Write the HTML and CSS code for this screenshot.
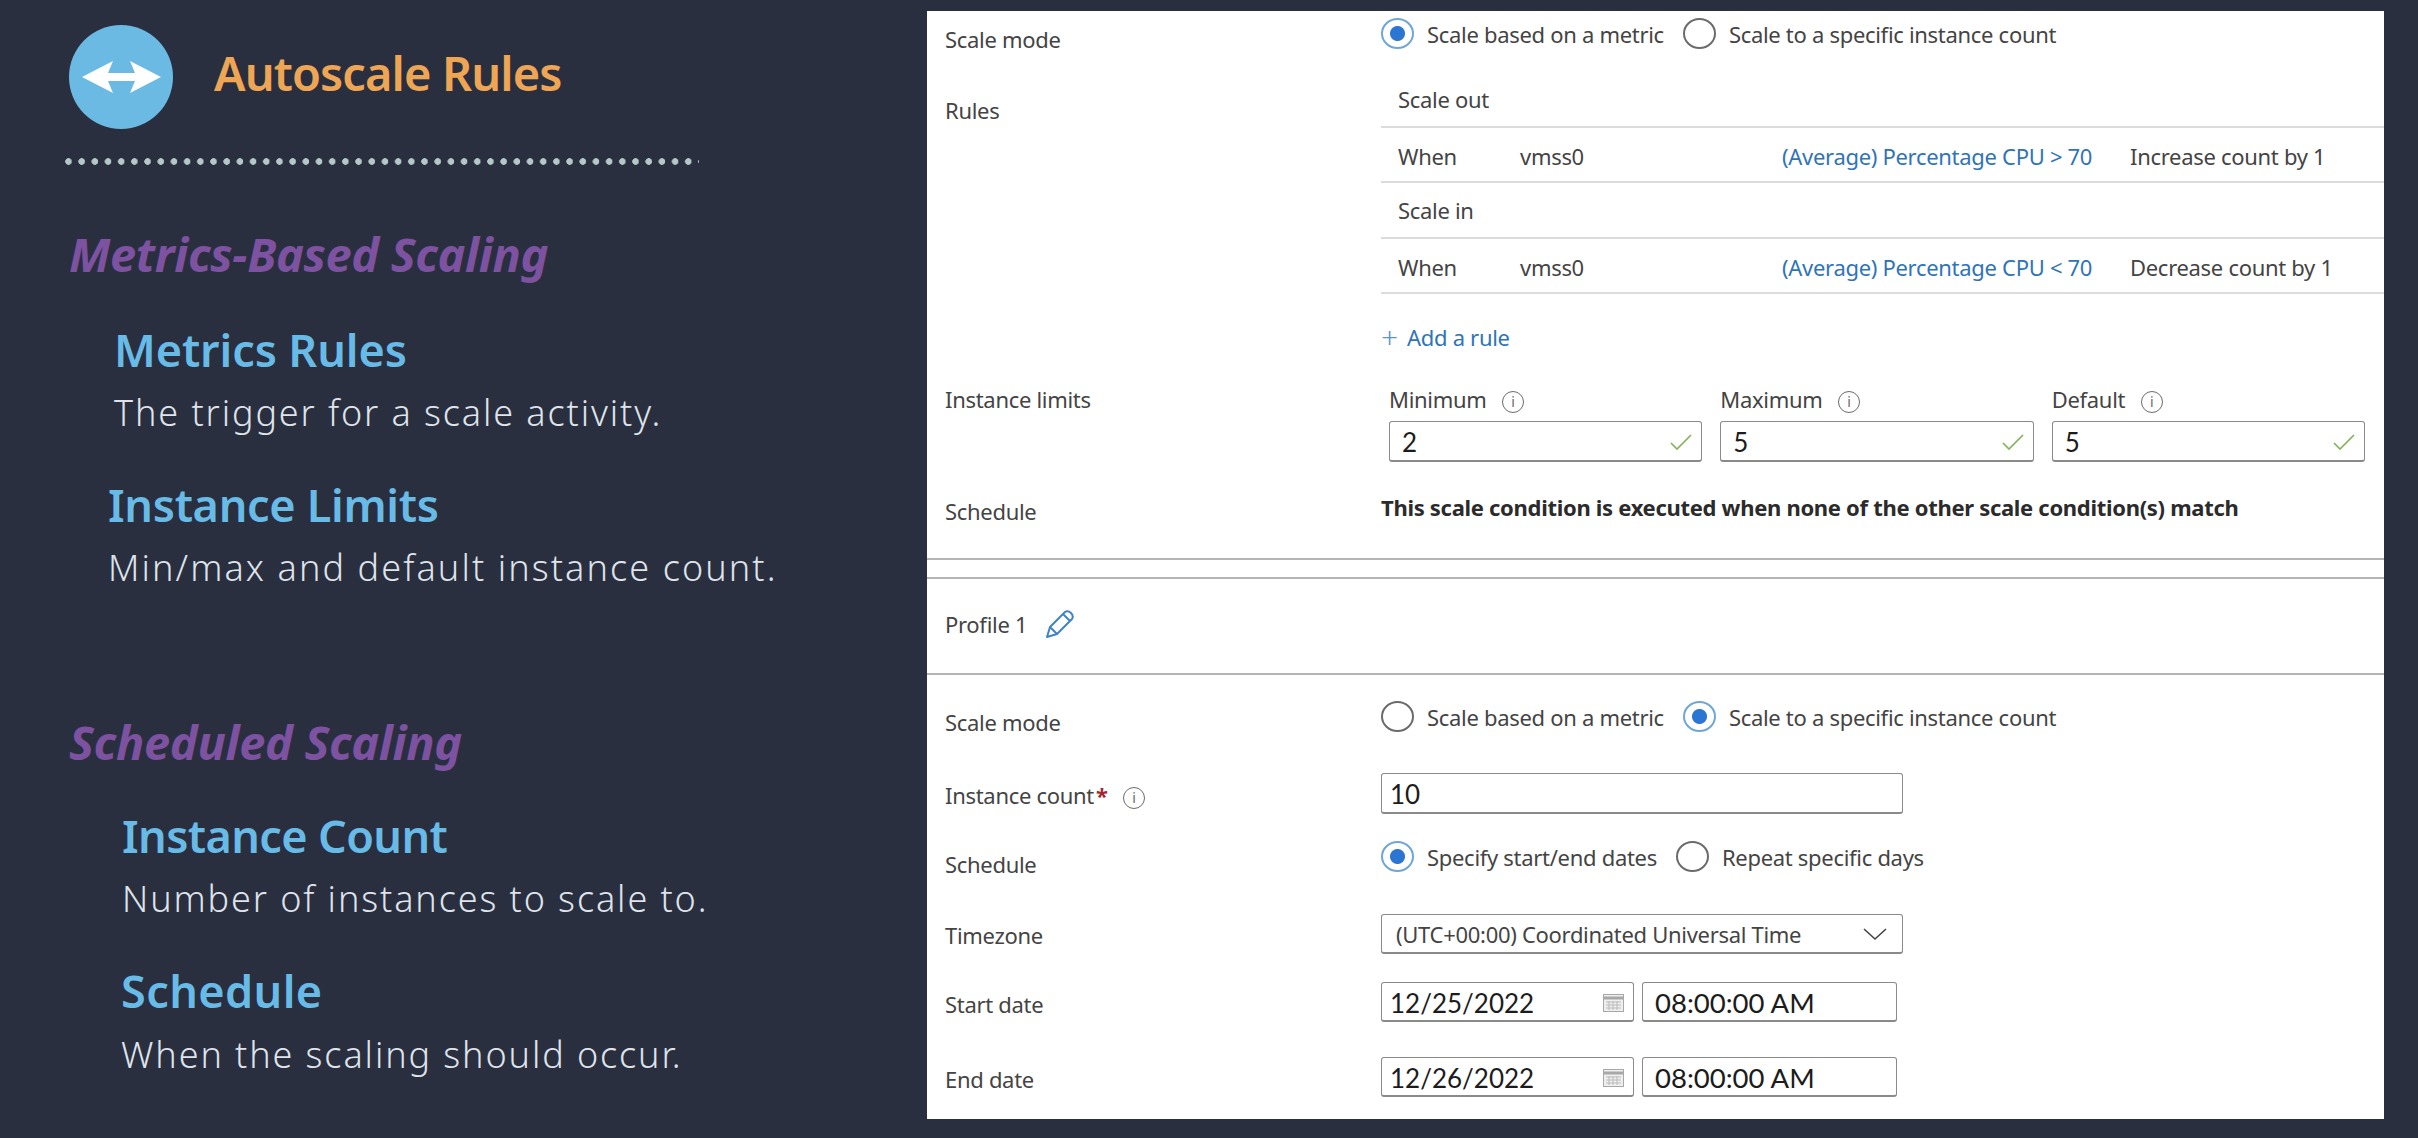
FILE: index.html
```html
<!DOCTYPE html>
<html lang="en">
<head>
    <meta charset="UTF-8">
    <meta name="viewport" content="width=device-width, initial-scale=1.0">
    <title>Autoscale Rules</title>
    <link rel="stylesheet" href="styles.css">
</head>
<body>
    <div class="slide">
        <div class="notes">
            <div class="header">
                <div class="header-icon">
                    <svg width="79" height="32" viewBox="0 0 79 32">
                        <path d="M0 16 L31 0 L26 12 H53 L48 0 L79 16 L48 32 L53 20 H26 L31 32 Z" fill="#fff"/>
                    </svg>
                </div>
                <h1 class="title">Autoscale Rules</h1>
            </div>
            <div class="dots"></div>

            <h2 class="section section-metrics">Metrics-Based Scaling</h2>
            <h3 class="item item-rules">Metrics Rules</h3>
            <p class="desc desc-rules">The trigger for a scale activity.</p>
            <h3 class="item item-limits">Instance Limits</h3>
            <p class="desc desc-limits">Min/max and default instance count.</p>

            <h2 class="section section-scheduled">Scheduled Scaling</h2>
            <h3 class="item item-count">Instance Count</h3>
            <p class="desc desc-count">Number of instances to scale to.</p>
            <h3 class="item item-schedule">Schedule</h3>
            <p class="desc desc-schedule">When the scaling should occur.</p>
        </div>

        <div class="panel">
            <div class="row row-mode-top">
                <div class="label label-top">Scale mode</div>
                <div class="radios">
                    <span class="radio on"></span><span class="radio-text">Scale based on a metric</span>
                    <span class="radio"></span><span class="radio-text">Scale to a specific instance count</span>
                </div>
            </div>

            <div class="row">
                <div class="label label-rules">Rules</div>
                <div>
                    <div class="rule">Scale out</div>
                    <div class="rule rule-line">
                        <span class="rule-when">When</span>
                        <span class="rule-res">vmss0</span>
                        <a class="rule-metric">(Average) Percentage CPU &gt; 70</a>
                        <span>Increase count by 1</span>
                    </div>
                    <div class="rule">Scale in</div>
                    <div class="rule rule-line">
                        <span class="rule-when">When</span>
                        <span class="rule-res">vmss0</span>
                        <a class="rule-metric">(Average) Percentage CPU &lt; 70</a>
                        <span>Decrease count by 1</span>
                    </div>
                    <a class="add-rule"><span class="plus">+</span>Add a rule</a>
                </div>
            </div>

            <div class="row row-limits">
                <div class="label label-flush">Instance limits</div>
                <div class="limits">
                    <div>
                        <div class="limit-label">Minimum <span class="info">i</span></div>
                        <div class="input">2
                            <svg width="22" height="16" viewBox="0 0 22 16"><path d="M1 9 L7 15 L21 1" fill="none" stroke="#86b35a" stroke-width="1.7"/></svg>
                        </div>
                    </div>
                    <div>
                        <div class="limit-label">Maximum <span class="info">i</span></div>
                        <div class="input">5
                            <svg width="22" height="16" viewBox="0 0 22 16"><path d="M1 9 L7 15 L21 1" fill="none" stroke="#86b35a" stroke-width="1.7"/></svg>
                        </div>
                    </div>
                    <div>
                        <div class="limit-label">Default <span class="info">i</span></div>
                        <div class="input">5
                            <svg width="22" height="16" viewBox="0 0 22 16"><path d="M1 9 L7 15 L21 1" fill="none" stroke="#86b35a" stroke-width="1.7"/></svg>
                        </div>
                    </div>
                </div>
            </div>

            <div class="row row-note">
                <div class="label label-note">Schedule</div>
                <div class="note">This scale condition is executed when none of the other scale condition(s) match</div>
            </div>

            <div class="divider"></div>
            <div class="profile">
                Profile 1
                <svg width="30" height="30" viewBox="0 0 30 30">
                    <path d="M2 28 L5 18 L20 3 Q23 1 26 4 Q29 7 27 10 L12 25 Z M5 18 L12 25 M18 5 L25 12" fill="none" stroke="#3f83c6" stroke-width="2" stroke-linejoin="round"/>
                </svg>
            </div>

            <div class="row row-mode">
                <div class="label label-top">Scale mode</div>
                <div class="radios">
                    <span class="radio"></span><span class="radio-text">Scale based on a metric</span>
                    <span class="radio on"></span><span class="radio-text">Scale to a specific instance count</span>
                </div>
            </div>

            <div class="row row-count">
                <div class="label">Instance count<span class="required">*</span> <span class="info">i</span></div>
                <div class="input input-count">10</div>
            </div>

            <div class="row row-schedule">
                <div class="label label-low">Schedule</div>
                <div class="radios">
                    <span class="radio on"></span><span class="radio-text">Specify start/end dates</span>
                    <span class="radio"></span><span class="radio-text">Repeat specific days</span>
                </div>
            </div>

            <div class="row row-zone">
                <div class="label label-high">Timezone</div>
                <div class="input input-select">(UTC+00:00) Coordinated Universal Time
                    <svg width="26" height="14" viewBox="0 0 26 14"><path d="M2 2 L13 12 L24 2" fill="none" stroke="#444" stroke-width="1.6"/></svg>
                </div>
            </div>

            <div class="row row-start">
                <div class="label">Start date</div>
                <div class="datetime">
                    <div class="input input-date">12/25/2022
                        <svg width="21" height="19" viewBox="0 0 21 19">
                            <rect x="0.5" y="1.5" width="20" height="17" fill="#efefef" stroke="#a8a8a8"/>
                            <path d="M0 5 H21" stroke="#a8a8a8" stroke-width="3"/>
                            <path d="M3 9 H18 M3 12 H18 M3 15 H18 M6 8 V17 M10 8 V17 M14 8 V17" stroke="#bbb"/>
                        </svg>
                    </div>
                    <div class="input input-time">08:00:00 AM</div>
                </div>
            </div>

            <div class="row row-end">
                <div class="label">End date</div>
                <div class="datetime">
                    <div class="input input-date">12/26/2022
                        <svg width="21" height="19" viewBox="0 0 21 19">
                            <rect x="0.5" y="1.5" width="20" height="17" fill="#efefef" stroke="#a8a8a8"/>
                            <path d="M0 5 H21" stroke="#a8a8a8" stroke-width="3"/>
                            <path d="M3 9 H18 M3 12 H18 M3 15 H18 M6 8 V17 M10 8 V17 M14 8 V17" stroke="#bbb"/>
                        </svg>
                    </div>
                    <div class="input input-time">08:00:00 AM</div>
                </div>
            </div>
        </div>
    </div>
</body>
</html>
```

FILE: styles.css
```css
* {
    box-sizing: border-box;
}

body {
    margin: 0;
    background-color: #2a2f40;
    font-family: "Noto Sans", sans-serif;
}

.slide {
    display: flex;
    width: 2418px;
    height: 1138px;
    overflow: hidden;
}

/* left side */
.notes {
    width: 927px;
    flex: none;
    padding: 25px 0 0 69px;
}

.header {
    display: flex;
    align-items: center;
    gap: 41px;
}

.header-icon {
    width: 104px;
    height: 104px;
    border-radius: 50%;
    background-color: #6bbae4;
    display: flex;
    align-items: center;
    justify-content: center;
}

.title {
    margin: 0 0 8px;
    font-size: 47px;
    line-height: 60px;
    font-weight: 600;
    color: #eea655;
    letter-spacing: -0.9px;
}

.dots {
    width: 634px;
    height: 7px;
    margin: 29px 0 0 -4px;
    background-image: radial-gradient(circle at 3.5px 3.5px, #b4c8c8 3px, transparent 3.6px);
    background-size: 13.2px 7px;
    background-repeat: repeat-x;
}

.section {
    margin: 0;
    font-size: 47px;
    line-height: 50px;
    font-weight: 700;
    font-style: italic;
    color: #7d52a0;
    letter-spacing: -0.35px;
}

.section-metrics {
    margin-top: 64px;
}

.section-scheduled {
    margin-top: 129px;
}

.item {
    margin: 0;
    font-size: 45px;
    line-height: 44px;
    font-weight: 600;
    color: #67bbe6;
    letter-spacing: -0.1px;
}

.desc {
    margin: 21px 0 0;
    font-size: 36px;
    line-height: 40px;
    font-weight: 300;
    color: #dfe3ea;
    letter-spacing: 1.9px;
}

.item-rules {
    margin: 49px 0 0 45px;
}

.desc-rules {
    margin-left: 45px;
}

.item-limits {
    margin: 50px 0 0 39px;
    letter-spacing: -0.3px;
}

.desc-limits {
    margin-left: 39px;
    letter-spacing: 2.1px;
}

.item-count {
    margin: 47px 0 0 53px;
    letter-spacing: -0.6px;
}

.desc-count {
    margin-left: 53px;
}

.item-schedule {
    margin: 50px 0 0 52px;
    letter-spacing: 0.4px;
}

.desc-schedule {
    margin: 22px 0 0 52px;
}

/* right side */
.panel {
    width: 1457px;
    height: 1108px;
    flex: none;
    margin-top: 11px;
    background-color: #fff;
    color: #444;
    font-size: 22px;
    line-height: 30px;
    letter-spacing: -0.3px;
}

.row {
    display: grid;
    grid-template-columns: 436px 1fr;
    padding-left: 18px;
    align-items: start;
}

.label {
    margin-top: 7px;
    white-space: nowrap;
}

.label-top {
    margin-top: 6px;
}

.label-rules {
    margin-top: 23px;
}

.label-flush {
    margin-top: 0;
}

.label-note {
    margin-top: 4px;
}

.label-low {
    margin-top: 8px;
}

.label-high {
    margin-top: 6px;
}

.row-mode-top {
    height: 61px;
    padding-top: 7px;
}

.row-limits {
    margin-top: 32px;
}

.row-note {
    margin-top: 30px;
    height: 34px;
}

.row-mode {
    margin-top: 26px;
    height: 32px;
}

.row-count {
    margin-top: 40px;
}

.row-schedule {
    margin-top: 27px;
    height: 31px;
}

.row-zone {
    margin-top: 42px;
}

.row-start {
    margin-top: 28px;
}

.row-end {
    margin-top: 35px;
}

.radios {
    display: flex;
    align-items: center;
    height: 31px;
}

.radio {
    width: 33px;
    height: 31px;
    flex: none;
    border: 2px solid #6b6b6b;
    border-radius: 50%;
}

.radio.on {
    border-color: #6ea6d8;
    background: radial-gradient(circle, #2a76d2 7px, #fff 8px);
}

.radio-text {
    margin: 0 19px 0 13px;
}

.rule {
    height: 55.5px;
    display: flex;
    align-items: center;
    padding-left: 17px;
    border-bottom: 2px solid #dcdcdc;
    white-space: nowrap;
}

.rule-line {
    padding-top: 3px;
}

.rule-when {
    width: 122px;
}

.rule-res {
    width: 262px;
}

.rule-metric {
    width: 348px;
    color: #2f74b8;
}

.add-rule {
    display: block;
    margin-top: 28px;
    color: #2f74b8;
}

.plus {
    display: inline-block;
    width: 26px;
    font-size: 30px;
    font-weight: 300;
    line-height: 30px;
    vertical-align: top;
    color: #5b93cb;
}

.limits {
    display: grid;
    grid-template-columns: repeat(3, 1fr);
    gap: 18px;
    padding: 0 19px 0 8px;
}

.limit-label {
    margin-bottom: 7px;
}

.info {
    display: inline-block;
    width: 22px;
    height: 22px;
    margin-left: 10px;
    border: 1px solid #6b6b6b;
    border-radius: 50%;
    font-size: 14px;
    line-height: 20px;
    text-align: center;
    vertical-align: 1px;
    color: #6b6b6b;
}

.required {
    margin-left: 2px;
    color: #a4262c;
    font-weight: 700;
}

.input {
    display: flex;
    align-items: center;
    justify-content: space-between;
    height: 41px;
    padding: 2px 9px 0 12px;
    border: 1px solid #8a8a8a;
    border-bottom-width: 2px;
    border-radius: 3px;
    font-family: Lato, sans-serif;
    font-size: 26px;
    letter-spacing: 0;
    color: #1c1c1c;
}

.input-count {
    width: 522px;
    padding-left: 8px;
}

.input-select {
    width: 522px;
    height: 40px;
    padding: 0 14px;
    font-family: "Noto Sans", sans-serif;
    font-size: 22px;
    letter-spacing: -0.3px;
    color: #444;
}

.datetime {
    display: flex;
    gap: 8px;
}

.input-date {
    width: 253px;
    height: 40px;
    padding-left: 8px;
}

.input-time {
    width: 255px;
    height: 40px;
    font-size: 27.5px;
}

.note {
    font-weight: 700;
    color: #2b2b2b;
}

.divider {
    height: 21px;
    margin-top: 32px;
    border-top: 2px solid #b5b5b5;
    border-bottom: 2px solid #b5b5b5;
}

.profile {
    display: flex;
    align-items: center;
    gap: 18px;
    height: 96px;
    padding: 0 0 5px 18px;
    border-bottom: 2px solid #b5b5b5;
}
```
